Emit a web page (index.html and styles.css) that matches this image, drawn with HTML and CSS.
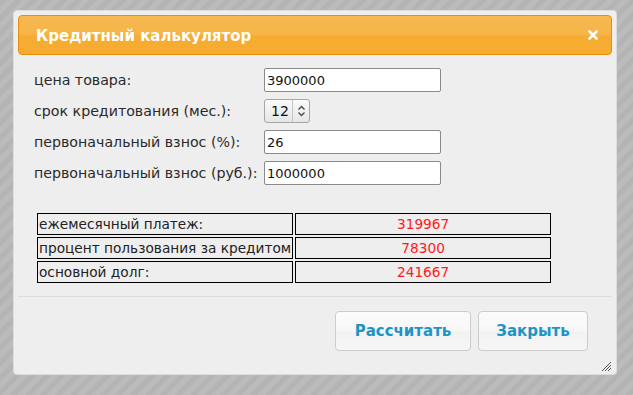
FILE: index.html
```html
<!DOCTYPE html>
<html lang="ru">

<head>
    <meta charset="UTF-8">
    <title>Кредитный калькулятор</title>
    <link rel="stylesheet" href="styles.css">
</head>

<body>
    <div class="dialog">
        <div class="titlebar">
            <span class="title">Кредитный калькулятор</span>
            <svg class="close" width="10" height="10" viewBox="0 0 10 10">
                <path d="M1.5 1.5 L8.5 8.5 M8.5 1.5 L1.5 8.5" stroke="#fff" stroke-width="2.6" stroke-linecap="square" />
            </svg>
        </div>

        <div class="content">
            <div class="form">
                <label class="label">цена товара:</label>
                <input class="field" type="text" value="3900000">

                <label class="label">срок кредитования (мес.):</label>
                <div class="select">
                    <span class="select-value">12</span>
                    <span class="select-arrows">
                        <svg width="9" height="12" viewBox="0 0 9 12">
                            <path d="M1.5 4.5 L4.5 1.5 L7.5 4.5 M1.5 7.5 L4.5 10.5 L7.5 7.5" fill="none" stroke="#444" stroke-width="1.3" />
                        </svg>
                    </span>
                </div>

                <label class="label">первоначальный взнос (%):</label>
                <input class="field" type="text" value="26">

                <label class="label">первоначальный взнос (руб.):</label>
                <input class="field" type="text" value="1000000">
            </div>

            <table class="result">
                <tr>
                    <td>ежемесячный платеж:</td>
                    <td class="num">319967</td>
                </tr>
                <tr>
                    <td>процент пользования за кредитом</td>
                    <td class="num">78300</td>
                </tr>
                <tr>
                    <td>основной долг:</td>
                    <td class="num">241667</td>
                </tr>
            </table>
        </div>

        <div class="buttonpane">
            <button class="btn btn-calc">Рассчитать</button>
            <button class="btn btn-close">Закрыть</button>
            <svg class="resize" width="12" height="12" viewBox="0 0 12 12">
                <path d="M11 2 L2 11 M11 5 L5 11 M11 8 L8 11" stroke="#555" stroke-width="1" />
            </svg>
        </div>
    </div>
</body>

</html>
```

FILE: styles.css
```css
body {
    margin: 0;
    height: 395px;
    padding: 10px 0 0 13px;
    box-sizing: border-box;
    overflow: hidden;
    font-family: "DejaVu Sans", sans-serif;
    background: repeating-linear-gradient(135deg, #b4b4b4 0, #b4b4b4 5px, #bbbbbb 5px, #bbbbbb 10.6px);
}

.dialog {
    width: 604px;
    height: 365px;
    box-sizing: border-box;
    padding: 4px;
    background: #eeeeee;
    border: 1px solid #dddddd;
    border-radius: 4px;
    display: flex;
    flex-direction: column;
}

.titlebar {
    height: 40px;
    box-sizing: border-box;
    display: flex;
    align-items: center;
    justify-content: space-between;
    padding: 0 13px 0 17px;
    border: 1px solid #e78f08;
    border-radius: 4px;
    background: linear-gradient(#f7b852, #f6b447 50%, #f6ab31 52%, #f6ab32);
    color: #fff;
}

.title {
    font-weight: bold;
    font-size: 15px;
    margin-top: 1px;
}

.close {
    display: block;
}

.content {
    padding: 13px 16px 0;
    flex: 1;
}

.form {
    display: grid;
    grid-template-columns: 230px 177px;
    grid-auto-rows: 24px;
    row-gap: 7px;
    align-items: center;
}

.label {
    font-size: 14.2px;
    color: #2a2a2a;
}

.field {
    width: 177px;
    height: 24px;
    box-sizing: border-box;
    margin: 0;
    padding: 0 2px;
    border: 1px solid #8a8a8a;
    border-radius: 2px;
    background: #fff;
    font-family: "DejaVu Sans", sans-serif;
    font-size: 13px;
    color: #111;
}

.select {
    width: 46px;
    height: 24px;
    box-sizing: border-box;
    display: flex;
    align-items: stretch;
    border: 1px solid #a6a6a6;
    border-radius: 3px;
    background: linear-gradient(#fafafa, #e6e6e6);
    font-size: 14px;
    color: #111;
}

.select-value {
    display: flex;
    align-items: center;
    padding-left: 6px;
    width: 21px;
    border-right: 1px solid #c4c4c4;
}

.select-arrows {
    flex: 1;
    display: flex;
    align-items: center;
    justify-content: center;
}

.result {
    margin: 26px 0 0 1px;
    border-spacing: 2px;
    font-size: 13.7px;
}

.result td {
    width: 252px;
    height: 20px;
    padding: 0 1px;
    border: 1px solid #000;
    color: #222;
    white-space: nowrap;
    overflow: hidden;
}

.result td.num {
    text-align: center;
    color: #ff1a1a;
}

.buttonpane {
    position: relative;
    border-top: 1px solid #dddddd;
    height: 74px;
    display: flex;
    justify-content: flex-end;
    align-items: flex-start;
    gap: 7px;
    padding: 14px 24px 0 0;
    box-sizing: border-box;
}

.btn {
    height: 40px;
    box-sizing: border-box;
    border: 1px solid #cccccc;
    border-radius: 4px;
    background: linear-gradient(#fbfbfb, #f7f7f7 50%, #f2f2f2 52%, #f6f6f6);
    color: #1c94c4;
    font-family: "DejaVu Sans", sans-serif;
    font-weight: bold;
    font-size: 15px;
    padding: 0;
}

.btn-calc {
    width: 136px;
}

.btn-close {
    width: 110px;
}

.resize {
    position: absolute;
    right: 0;
    bottom: -2px;
}
```
